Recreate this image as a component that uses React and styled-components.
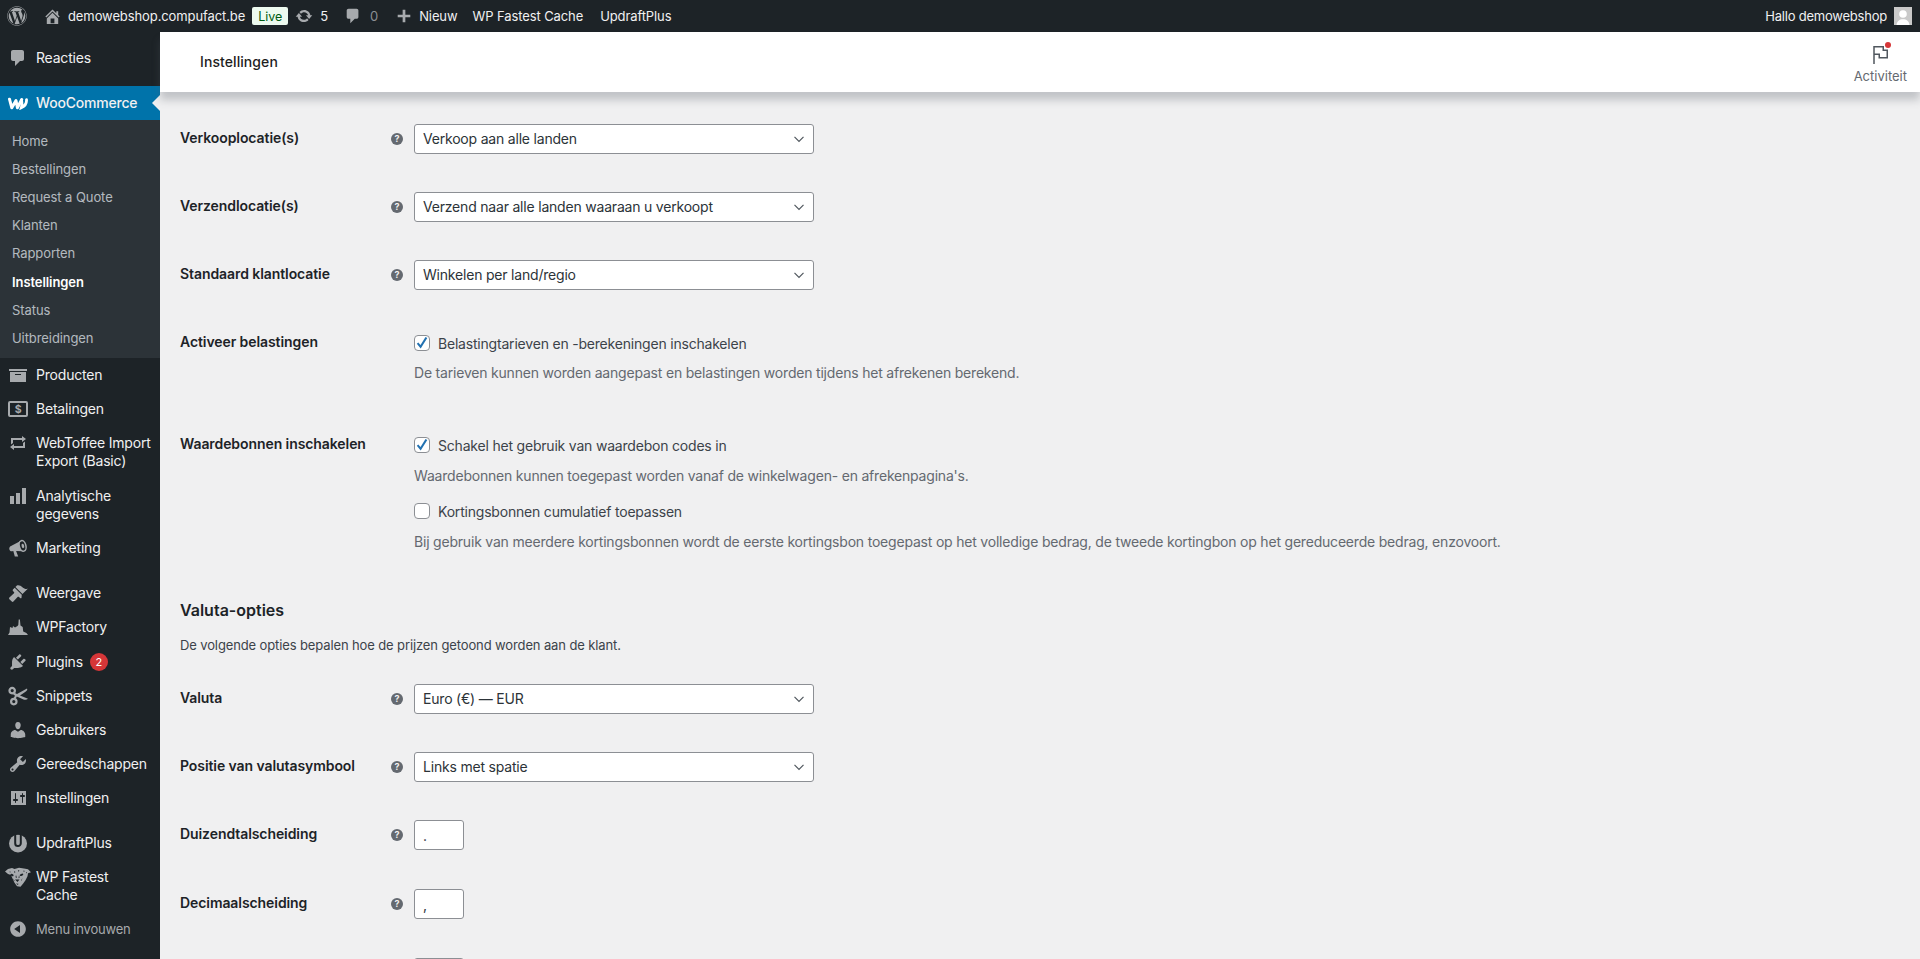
import React from "react";
import styled, { createGlobalStyle } from "styled-components";
import { FaWordpress } from "react-icons/fa";

const GlobalStyle = createGlobalStyle`
  html, body { margin: 0; padding: 0; height: 100%; overflow: hidden; background: #f0f0f1; }
  body { font-family: Inter, "Noto Sans", "Liberation Sans", sans-serif; font-size: 14px; color: #3c434a; }
  * { box-sizing: border-box; }
`;

const Page = styled.div`
  height: 959px;
  display: flex;
  flex-direction: column;
  overflow: hidden;
`;

const TopBar = styled.header`
  flex: 0 0 32px;
  background: #1d2327;
  color: #f0f0f1;
  display: flex;
  align-items: center;
  font-size: 13px;
  letter-spacing: -0.1px;
  padding: 0 8px 0 7px;
`;

const BarItem = styled.span`
  display: flex;
  align-items: center;
  gap: ${(p) => p.$gap || 0}px;
  margin-left: ${(p) => p.$left || 0}px;
  color: ${(p) => (p.$muted ? "#8c8f94" : "#f0f0f1")};
  white-space: nowrap;
  svg { fill: #a7aaad; flex: none; display: block; }
`;

const LiveBadge = styled.span`
  height: 18px;
  width: 36px;
  margin-left: 7px;
  background: #edfaef;
  color: #005c12;
  border-radius: 2px;
  display: flex;
  align-items: center;
  justify-content: center;
  font-size: 12.5px;
`;

const Greeting = styled.span`
  margin-left: auto;
  display: flex;
  align-items: center;
  gap: 7px;
  letter-spacing: -0.22px;
  white-space: nowrap;
`;

const Avatar = styled.span`
  width: 18px;
  height: 18px;
  background: #c9c9c9;
  overflow: hidden;
  svg { display: block; fill: #fff; }
`;

const Body = styled.div`
  flex: 1;
  min-height: 0;
  display: flex;
`;

const Sidebar = styled.nav`
  flex: 0 0 160px;
  background: #1d2327;
  padding-top: 9px;
  overflow: hidden;
`;

const MenuRow = styled.div`
  position: relative;
  display: flex;
  align-items: flex-start;
  padding: ${(p) => (p.$badge ? 9 : 8)}px 0 ${(p) => (p.$tall ? 9 : 8)}px;
  line-height: 18px;
  letter-spacing: -0.2px;
  font-size: ${(p) => (p.$muted ? 13 : 14)}px;
  color: ${(p) => (p.$muted ? "#a7aaad" : "#f0f0f1")};
  background: ${(p) => (p.$active ? "#0073aa" : "transparent")};
  font-weight: ${(p) => (p.$active ? 500 : 400)};
  ${(p) =>
    p.$active &&
    `&::after {
      content: "";
      position: absolute;
      right: 0;
      top: 9px;
      border: 8px solid transparent;
      border-right-color: #f0f0f1;
      border-left-width: 0;
    }`}
`;

const MenuIcon = styled.span`
  flex: 0 0 36px;
  height: 18px;
  display: flex;
  align-items: center;
  justify-content: center;
  svg { display: block; fill: ${(p) => (p.$active ? "#fff" : "#a7aaad")}; flex: none; }
`;

const MenuLabel = styled.span`
  width: 116px;
  display: flex;
  align-items: center;
`;

const Separator = styled.div`
  height: 11px;
`;

const SubMenu = styled.div`
  background: #2c3338;
  padding: 6.5px 0 5.5px;
`;

const SubItem = styled.div`
  padding: 5px 12px;
  font-size: 13px;
  line-height: 18.2px;
  letter-spacing: -0.08px;
  color: ${(p) => (p.$current ? "#fff" : "rgba(240,246,252,.7)")};
  font-weight: ${(p) => (p.$current ? 600 : 400)};
`;

const Badge = styled.span`
  flex: none;
  display: flex;
  align-items: center;
  justify-content: center;
  width: 18px;
  height: 18px;
  margin-left: 7px;
  border-radius: 50%;
  background: #d63638;
  color: #fff;
  font-size: 11px;
  letter-spacing: 0;
`;

const Main = styled.main`
  flex: 1;
  min-width: 0;
  display: flex;
  flex-direction: column;
`;

const Header = styled.div`
  flex: 0 0 60px;
  background: #fff;
  position: relative;
  z-index: 2;
  box-shadow: 0 8px 8px rgba(85, 93, 102, 0.3);
  display: flex;
  align-items: center;
  justify-content: space-between;
  padding: 0 13px 0 40px;
`;

const HeaderTitle = styled.h1`
  margin: 0;
  font-size: 14px;
  font-weight: 500;
  letter-spacing: 0.08px;
  color: #1e1e1e;
  padding-bottom: 2px;
`;

const Activity = styled.div`
  display: flex;
  flex-direction: column;
  align-items: center;
  gap: 2px;
  font-size: 13px;
  line-height: 16px;
  color: #646970;
  padding-top: 2px;
`;

const FlagWrap = styled.span`
  position: relative;
  display: block;
  width: 24px;
  height: 24px;
  svg { display: block; }
`;

const FlagDot = styled.span`
  position: absolute;
  top: 0;
  right: 1px;
  width: 6px;
  height: 6px;
  border-radius: 50%;
  background: #d63638;
`;

const Content = styled.div`
  flex: 1;
  min-height: 0;
  overflow: hidden;
  padding: 32px 0 0 20px;
  letter-spacing: -0.2px;
`;

const Row = styled.div`
  display: grid;
  grid-template-columns: 234px 1fr;
  padding-bottom: ${(p) => p.$bottom ?? 38}px;
`;

const LabelCell = styled.div`
  height: 30px;
  display: flex;
  align-items: center;
  justify-content: space-between;
  padding: 0 11px 3px 0;
  font-weight: 600;
  letter-spacing: -0.08px;
  color: #1d2327;
`;

const Help = styled.span`
  width: 12px;
  height: 12px;
  margin-top: 3px;
  border-radius: 50%;
  background: #646970;
  color: #f0f0f1;
  font-size: 9px;
  font-weight: 700;
  line-height: 12px;
  letter-spacing: 0;
  text-align: center;
`;

const SelectWrap = styled.div`
  position: relative;
  width: 400px;
  height: 30px;
  svg { position: absolute; right: 9px; top: 9px; pointer-events: none; }
`;

const Select = styled.select`
  appearance: none;
  width: 100%;
  height: 30px;
  padding: 0 24px 2px 8px;
  border: 1px solid #8c8f94;
  border-radius: 3px;
  background: #fff;
  color: #2c3338;
  font: inherit;
  letter-spacing: inherit;
  outline: none;
`;

const SmallInput = styled.input`
  display: block;
  width: 50px;
  height: 30px;
  padding: 0 8px;
  border: 1px solid #8c8f94;
  border-radius: 3px;
  background: #fff;
  color: #2c3338;
  font: inherit;
  outline: none;
`;

const CheckLine = styled.label`
  display: flex;
  align-items: center;
  gap: 8px;
  height: 30px;
  color: #3c434a;
  margin-top: ${(p) => p.$top || 0}px;
`;

const CheckBox = styled.span`
  width: 16px;
  height: 16px;
  border: 1px solid #8c8f94;
  border-radius: 4px;
  background: #fff;
  display: flex;
  align-items: center;
  justify-content: center;
  svg { display: block; }
`;

const Description = styled.p`
  margin: ${(p) => p.$top ?? 5}px 0 0;
  line-height: 20px;
  color: #646970;
`;

const SectionTitle = styled.h2`
  margin: 0;
  font-size: 16px;
  line-height: 24px;
  font-weight: 600;
  letter-spacing: 0;
  color: #1d2327;
`;

const SectionText = styled.p`
  margin: 13px 0 29px;
  font-size: 13px;
  line-height: 20px;
  letter-spacing: -0.12px;
  color: #3c434a;
`;

const Svg = ({ size = 20, d, children, ...rest }) => (
  <svg width={size} height={size} viewBox="0 0 20 20" {...rest}>
    {d ? <path d={d} /> : children}
  </svg>
);

const paths = {
  home: "M16 8.5l1.53 1.53-1.06 1.06L10 4.62l-6.47 6.47-1.06-1.06L10 2.5l4 4v-2h2v4zm-6-2.46l6 5.99V18H4v-5.97zM12 17v-5H8v5h4z",
  comment: "M5 2h9c1.1 0 2 .9 2 2v7c0 1.1-.9 2-2 2h-2l-5 5v-5H5c-1.1 0-2-.9-2-2V4c0-1.1.9-2 2-2z",
  plus: "M17 8.5v3h-5.500v5.500h-3v-5.500H3v-3h5.500V3h3v5.500H17z",
  update: "M10.2 3.28c3.53 0 6.43 2.61 6.92 6h2.08l-3.5 4-3.5-4h2.32c-.45-1.97-2.21-3.44-4.32-3.44-1.45 0-2.73.71-3.54 1.78L4.95 5.66C6.23 4.2 8.11 3.28 10.2 3.28zm-.4 13.44c-3.52 0-6.43-2.61-6.92-6H.8l3.5-4c1.17 1.33 2.33 2.67 3.5 4H5.48c.45 1.97 2.21 3.44 4.32 3.44 1.45 0 2.73-.71 3.54-1.78l1.71 1.95c-1.28 1.46-3.15 2.38-5.25 2.38z",
  archive: "M19 4v2H1V4h18zM2 7h16v10H2V7zm11 3V9H7v1h6z",
  repeat: "M5 7v3l-2 1.5V5h11V3l4 3.01L14 9V7H5zm10 6v-3l2-1.5V15H6v2l-4-3.01L6 11v2h9z",
  bars: "M18 18V2h-4v16h4zm-6 0V7H8v11h4zm-6 0v-8H2v8h4z",
  brush: "M14.48 11.06L7.41 3.99l1.5-1.5c.5-.56 2.3-.47 3.51.32 1.21.8 1.43 1.28 2.91 2.1 1.18.64 2.45 1.26 4.45.85zM13.77 11.77L6.7 4.7 4.93 6.47c-.39.39-.39 1.02 0 1.41l1.06 1.06c.39.39.39 1.03 0 1.42L1.4 14.600c-.4.4-.5 1.100 0 1.600l2.400 2.400c.5.5 1.200.4 1.600 0l4.200-4.600c.39-.39 1.03-.39 1.42 0l1.060 1.060c.39.39 1.020.39 1.410 0z",
  factory: "M0 18l1.500-2.500.5-5.500 2.500 1 .5-2 2 1.500 2.500-1.500.8-1 .4-5.500h1.200l.6 6 2.200 1.500.5 4.500 3.200 1.500L20 18z",
  plugin: "M13.11 4.360L9.870 7.600 8 5.730l3.240-3.240c.35-.34 1.050-.2 1.560.32.52.51.66 1.210.31 1.550zm-8 1.770l.91-1.120 9.010 9.010-1.190.84c-.71.71-2.630 1.160-3.820 1.160H6.140L4.900 17.260c-.59.59-1.540.59-2.120 0-.59-.58-.59-1.530 0-2.120l1.240-1.240v-3.880c0-1.130.4-3.190 1.090-3.890zm7.260 3.970l3.240-3.240c.34-.35 1.040-.21 1.550.31.52.51.66 1.210.31 1.550l-3.240 3.250z",
  user: "M10 9.250c-2.270 0-2.730-3.440-2.730-3.440C7 4.020 7.820 2 9.970 2c2.160 0 2.980 2.020 2.710 3.810 0 0-.41 3.440-2.680 3.440zm0 2.570L12.720 10c2.390 0 4.520 2.330 4.520 4.530v2.490s-3.650 1.130-7.240 1.130c-3.650 0-7.240-1.130-7.240-1.130v-2.490c0-2.250 1.940-4.480 4.470-4.480z",
  tools: "M16.680 9.770c-1.340 1.340-3.300 1.670-4.950.99l-5.410 6.520c-.99.99-2.590.99-3.580 0s-.99-2.590 0-3.570l6.520-5.420c-.68-1.650-.35-3.610.99-4.950 1.280-1.280 3.120-1.620 4.720-1.060l-2.890 2.890 2.820 2.820 2.860-2.870c.53 1.580.18 3.390-1.080 4.650zM3.810 16.210c.4.39 1.040.39 1.430 0 .4-.4.4-1.040 0-1.430-.39-.4-1.030-.4-1.430 0-.39.39-.39 1.030 0 1.430z",
  settings: "M18 17V3H3v14h15zM8 11h1c.55 0 1 .45 1 1s-.45 1-1 1H8v1.500c0 .28-.22.5-.5.5s-.5-.22-.5-.5V13H6c-.55 0-1-.45-1-1s.45-1 1-1h1V5.500c0-.28.22-.5.5-.5s.5.22.5.5V11zm6-2h-1c-.55 0-1-.45-1-1s.45-1 1-1h1V5.500c0-.28.22-.5.5-.5s.5.22.5.5V7h1c.55 0 1 .45 1 1s-.45 1-1 1h-1v5.500c0 .28-.22.5-.5.5s-.5-.22-.5-.5V9z",
  collapse: "M10 2.160c4.330 0 7.840 3.510 7.840 7.840s-3.510 7.840-7.840 7.840S2.160 14.330 2.160 10 5.710 2.160 10 2.160zm2 11.720V6.120L6.180 9.880z",
};

const Megaphone = () => (
  <Svg>
    <path d="M13.500 2.500L3 8c-1.400.6-2 2-1.600 3.400.4 1.300 1.500 2.100 2.800 1.900l1.100-.2L6.800 18.500h3.400l-2.100-5.400 7 .2z" />
    <ellipse cx="14.600" cy="7.900" rx="3.300" ry="5.400" transform="rotate(-15 14.600 7.900)" fill="#1d2327" stroke="#a7aaad" strokeWidth="1.500" />
    <ellipse cx="14.900" cy="7.900" rx="1.300" ry="2.300" transform="rotate(-15 14.900 7.900)" />
  </Svg>
);

const Payments = () => (
  <svg width="20" height="16" viewBox="0 0 20 16">
    <rect x="1" y="1" width="18" height="14" rx="1" fill="none" stroke="#a7aaad" strokeWidth="2" />
    <text x="10" y="12" fontSize="10.500" fontWeight="700" textAnchor="middle" fontFamily="Inter, sans-serif">$</text>
  </svg>
);

const WooLogo = () => (
  <svg width="20" height="13" viewBox="0 0 20 13">
    <path d="M1.500 2.200l2.300 8.600 4.200-7.300 1.400 7.300L13.700 2.500" fill="none" stroke="#fff" strokeWidth="3" strokeLinejoin="round" strokeLinecap="round" />
    <path d="M13.500 3c.6 2.600.6 5-.2 7.800 3.500-1.600 5.500-4.400 5.200-8.200" fill="none" stroke="#fff" strokeWidth="2.800" strokeLinecap="round" />
  </svg>
);

const SnippetScissors = () => (
  <svg width="21" height="20" viewBox="0 0 21 20">
    <g fill="none" stroke="#a7aaad" strokeWidth="2.200">
      <circle cx="4.200" cy="4.600" r="2.700" />
      <circle cx="5.800" cy="15.600" r="2.700" />
    </g>
    <path d="M6 6.400l3 1.600 10-5.500c.8 1.200-.2 2.500-1.500 3.300l-5.500 3.700 8 3.300c-1.200 1.100-3 1.200-4.500.6L8.800 10.500 7.300 13.500 5.300 12.400 7 9.800 4.800 8z" fill="#a7aaad" />
  </svg>
);

const Updraft = () => (
  <Svg>
    <circle cx="10" cy="10.500" r="9" />
    <path d="M7.200 1.500v8.700c0 3.800 5.600 3.800 5.600 0V1.500" fill="none" stroke="#1d2327" strokeWidth="2" />
    <rect x="5" y="-1" width="10" height="2.600" fill="#1d2327" />
  </Svg>
);

const Cheetah = () => (
  <svg width="26" height="20" viewBox="0 0 26 20">
    <path d="M0 4.500L3 2l4-1 2.500 1L14 .8l5 .7 4 .7 3 3-3 1-.5 3-2 4-2.500 3.500-2.500 3-3.500-.5-2.500-3.500-2-4.200L6 8l-3-1z" fill="#a7aaad" />
    <g fill="#1d2327">
      <ellipse cx="7" cy="8" rx="1.700" ry="1" transform="rotate(25 7 8)" />
      <ellipse cx="16.500" cy="7.800" rx="1.900" ry="1" transform="rotate(-25 16.500 7.800)" />
      <path d="M10 12.500h4.500l-2 2.500zM9 4l1.500 1-1 1zM13 3l1.400.5-.8 1.500zM18.500 3.500l1.400.6-1.200 1zM4.500 4.500l1.300.3-.8 1zM21 5l1 .5-1 1zM11 8l1 3-1.500-.7zM14 8.200l-.5 3 1.200-.8zM8 11.500l1.500 2-.3.8zM17.500 11l-1.500 2.500.5.3zM11 16.500l2.500.2-.6 1.200z" />
    </g>
  </svg>
);

const Chevron = () => (
  <svg width="12" height="12" viewBox="0 0 12 12">
    <path d="M1.500 3.800L6 8.300l4.500-4.500" fill="none" stroke="#50575e" strokeWidth="1.200" />
  </svg>
);

const Tick = () => (
  <svg width="14" height="14" viewBox="0 0 14 14">
    <path d="M5.700 12.500L1.800 7.800l1.500-1.300 2.200 2.600L10.500 1l1.800 1z" fill="#2271b1" />
  </svg>
);

const iconOf = (name) => {
  if (name === "payments") return <Payments />;
  if (name === "megaphone") return <Megaphone />;
  if (name === "woo") return <WooLogo />;
  if (name === "updraft") return <Updraft />;
  if (name === "cheetah") return <Cheetah />;
  if (name === "scissors") return <SnippetScissors />;
  return <Svg d={paths[name]} />;
};

const subItems = ["Home", "Bestellingen", "Request a Quote", "Klanten", "Rapporten", "Instellingen", "Status", "Uitbreidingen"];

const menuItems = [
  { icon: "comment", label: "Reacties" },
  "sep",
  { icon: "woo", label: "WooCommerce", active: true },
  "sub",
  { icon: "archive", label: "Producten" },
  { icon: "payments", label: "Betalingen" },
  { icon: "repeat", label: "WebToffee Import Export (Basic)", tall: true },
  { icon: "bars", label: "Analytische gegevens" },
  { icon: "megaphone", label: "Marketing" },
  "sep",
  { icon: "brush", label: "Weergave" },
  { icon: "factory", label: "WPFactory" },
  { icon: "plugin", label: "Plugins", badge: 2 },
  { icon: "scissors", label: "Snippets" },
  { icon: "user", label: "Gebruikers" },
  { icon: "tools", label: "Gereedschappen" },
  { icon: "settings", label: "Instellingen" },
  "sep",
  { icon: "updraft", label: "UpdraftPlus" },
  { icon: "cheetah", label: "WP Fastest Cache" },
  { icon: "collapse", label: "Menu invouwen", muted: true },
];

const SelectRow = ({ label, value }) => (
  <Row>
    <LabelCell>{label}<Help>?</Help></LabelCell>
    <SelectWrap>
      <Select defaultValue={value}><option>{value}</option></Select>
      <Chevron />
    </SelectWrap>
  </Row>
);

const InputRow = ({ label, value, bottom }) => (
  <Row $bottom={bottom}>
    <LabelCell>{label}{label && <Help>?</Help>}</LabelCell>
    <SmallInput defaultValue={value} />
  </Row>
);

const Check = ({ checked, top, children }) => (
  <CheckLine $top={top}>
    <CheckBox>{checked && <Tick />}</CheckBox>
    {children}
  </CheckLine>
);

export default function App() {
  return (
    <Page>
      <GlobalStyle />
      <TopBar>
        <BarItem><FaWordpress size={20} color="#a7aaad" /></BarItem>
        <BarItem $left={16} $gap={6}><Svg size={19} d={paths.home} />demowebshop.compufact.be</BarItem>
        <LiveBadge>Live</LiveBadge>
        <BarItem $left={7} $gap={7}><Svg size={18} d={paths.update} />5</BarItem>
        <BarItem $left={16} $gap={8} $muted><Svg size={18} d={paths.comment} />0</BarItem>
        <BarItem $left={17} $gap={6}><Svg size={18} d={paths.plus} />Nieuw</BarItem>
        <BarItem $left={15}>WP Fastest Cache</BarItem>
        <BarItem $left={17}>UpdraftPlus</BarItem>
        <Greeting>
          Hallo demowebshop
          <Avatar>
            <svg width="18" height="18" viewBox="0 0 18 18">
              <circle cx="9" cy="7" r="3.800" />
              <path d="M2.500 18c.4-4 3-5.800 6.500-5.800s6.100 1.800 6.500 5.800z" />
            </svg>
          </Avatar>
        </Greeting>
      </TopBar>
      <Body>
        <Sidebar>
          {menuItems.map((item, i) => {
            if (item === "sep") return <Separator key={i} />;
            if (item === "sub")
              return (
                <SubMenu key={i}>
                  {subItems.map((s) => (
                    <SubItem key={s} $current={s === "Instellingen"}>{s}</SubItem>
                  ))}
                </SubMenu>
              );
            return (
              <MenuRow key={i} $active={item.active} $muted={item.muted} $tall={item.tall} $badge={item.badge}>
                <MenuIcon $active={item.active}>{iconOf(item.icon)}</MenuIcon>
                <MenuLabel>
                  {item.label}
                  {item.badge && <Badge>{item.badge}</Badge>}
                </MenuLabel>
              </MenuRow>
            );
          })}
        </Sidebar>
        <Main>
          <Header>
            <HeaderTitle>Instellingen</HeaderTitle>
            <Activity>
              <FlagWrap>
                <svg width="24" height="24" viewBox="0 0 24 24" fill="none" stroke="#50575e" strokeWidth="1.500">
                  <path d="M6 22V4.750h9.250v3.500h4v7.500h-8v-3.500H6" />
                </svg>
                <FlagDot />
              </FlagWrap>
              Activiteit
            </Activity>
          </Header>
          <Content>
            <SelectRow label="Verkooplocatie(s)" value="Verkoop aan alle landen" />
            <SelectRow label="Verzendlocatie(s)" value="Verzend naar alle landen waaraan u verkoopt" />
            <SelectRow label="Standaard klantlocatie" value="Winkelen per land/regio" />
            <Row $bottom={47}>
              <LabelCell>Activeer belastingen</LabelCell>
              <div>
                <Check checked>Belastingtarieven en -berekeningen inschakelen</Check>
                <Description>De tarieven kunnen worden aangepast en belastingen worden tijdens het afrekenen berekend.</Description>
              </div>
            </Row>
            <Row $bottom={46}>
              <LabelCell>Waardebonnen inschakelen</LabelCell>
              <div>
                <Check checked>Schakel het gebruik van waardebon codes in</Check>
                <Description $top={6}>Waardebonnen kunnen toegepast worden vanaf de winkelwagen- en afrekenpagina's.</Description>
                <Check top={10}>Kortingsbonnen cumulatief toepassen</Check>
                <Description $top={6}>Bij gebruik van meerdere kortingsbonnen wordt de eerste kortingsbon toegepast op het volledige bedrag, de tweede kortingbon op het gereduceerde bedrag, enzovoort.</Description>
              </div>
            </Row>
            <SectionTitle>Valuta-opties</SectionTitle>
            <SectionText>De volgende opties bepalen hoe de prijzen getoond worden aan de klant.</SectionText>
            <SelectRow label="Valuta" value="Euro (€) — EUR" />
            <SelectRow label="Positie van valutasymbool" value="Links met spatie" />
            <InputRow label="Duizendtalscheiding" value="." bottom={39} />
            <InputRow label="Decimaalscheiding" value="," bottom={39} />
            <InputRow value="2" />
          </Content>
        </Main>
      </Body>
    </Page>
  );
}
